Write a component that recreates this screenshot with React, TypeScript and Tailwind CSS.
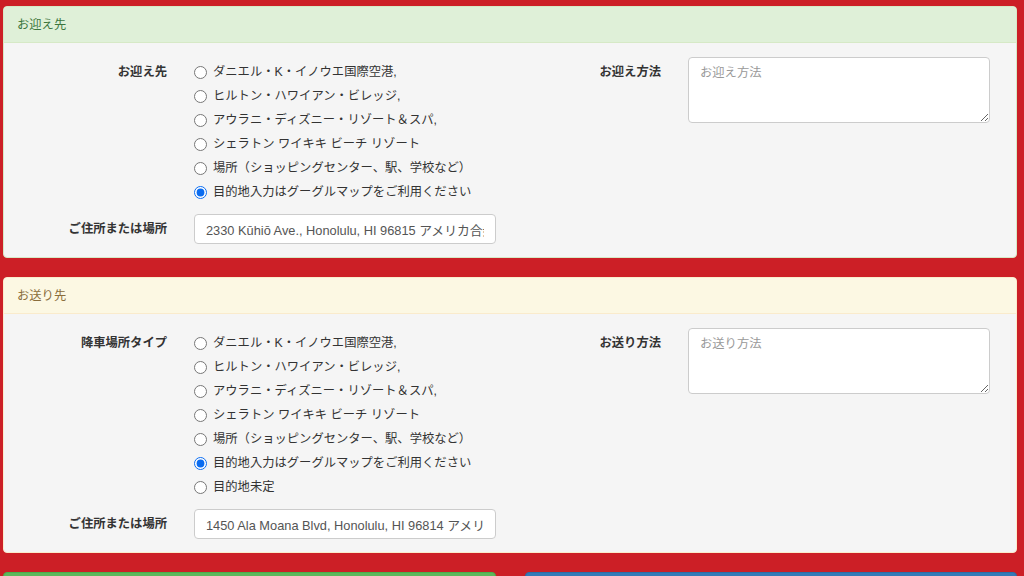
import React from "react";

const places = [
  "ダニエル・K・イノウエ国際空港,",
  "ヒルトン・ハワイアン・ビレッジ,",
  "アウラニ・ディズニー・リゾート＆スパ,",
  "シェラトン ワイキキ ビーチ リゾート",
  "場所（ショッピングセンター、駅、学校など）",
  "目的地入力はグーグルマップをご利用ください",
];

interface PanelProps {
  title: string;
  tone: "success" | "warning";
  label: string;
  methodLabel: string;
  options: string[];
  address: string;
  name: string;
}

function Panel({ title, tone, label, methodLabel, options, address, name }: PanelProps) {
  const border = tone === "success" ? "border-[#d6e9c6]" : "border-[#faebcc]";
  const head =
    tone === "success"
      ? "bg-[#dff0d8] text-[#3c763d] border-[#d6e9c6]"
      : "bg-[#fcf8e3] text-[#8a6d3b] border-[#faebcc]";

  return (
    <div className={`mb-[19px] overflow-hidden rounded-[4px] border bg-[#f5f5f5] ${border}`}>
      <div className={`flex h-[36px] items-center border-b px-[13px] pt-[2px] text-[12.3px] ${head}`}>
        {title}
      </div>
      <div className="flex pl-[14px] pt-[14px] pb-[13px]">
        <div className="w-[492px]">
          <div className="flex items-start gap-[27px]">
            <div className="w-[149px] pt-[3px] text-right text-[12.3px] font-bold leading-[24px] text-[#333]">
              {label}
            </div>
            <div className="flex flex-col pt-[3px]">
              {options.map((opt, i) => (
                <label key={opt} className="flex h-[24px] items-center gap-[6px] text-[12.3px] text-[#333]">
                  <input
                    type="radio"
                    name={name}
                    defaultChecked={i === 5}
                    className="m-0 h-[13px] w-[13px] accent-[#0a6cf0]"
                  />
                  <span>{opt}</span>
                </label>
              ))}
            </div>
          </div>
          <div className="mt-[10px] flex items-center gap-[27px]">
            <div className="w-[149px] text-right text-[12.3px] font-bold text-[#333]">ご住所または場所</div>
            <input
              type="text"
              defaultValue={address}
              className="h-[30px] w-[302px] rounded-[4px] border border-[#ccc] bg-white px-[11px] text-[12.8px] text-[#555] outline-none"
            />
          </div>
        </div>
        <div className="flex items-start gap-[27px]">
          <div className="w-[151px] pt-[3px] text-right text-[12.3px] font-bold leading-[24px] text-[#333]">
            {methodLabel}
          </div>
          <textarea
            placeholder={methodLabel}
            className="h-[66px] w-[302px] rounded-[4px] border border-[#ccc] bg-white px-[11px] py-[5px] text-[12.3px] leading-[20px] text-[#555] outline-none placeholder:text-[#999]"
          />
        </div>
      </div>
    </div>
  );
}

export default function App() {
  return (
    <div
      className="h-[576px] overflow-hidden bg-[#cc1f26] px-[3px] pt-[6px] pr-[7px]"
      style={{ fontFamily: '"Liberation Sans", "Noto Sans CJK JP", sans-serif' }}
    >
      <Panel
        title="お迎え先"
        tone="success"
        label="お迎え先"
        methodLabel="お迎え方法"
        options={places}
        address="2330 Kūhiō Ave., Honolulu, HI 96815 アメリカ合衆国"
        name="pickup"
      />
      <Panel
        title="お送り先"
        tone="warning"
        label="降車場所タイプ"
        methodLabel="お送り方法"
        options={[...places, "目的地未定"]}
        address="1450 Ala Moana Blvd, Honolulu, HI 96814 アメリカ合衆国"
        name="dropoff"
      />
      <div className="flex gap-[29px]">
        <button className="h-[40px] w-[493px] rounded-[4px] border border-[#4cae4c] bg-[#5cb85c]" />
        <button className="h-[40px] w-[492px] rounded-[4px] border border-[#2e6da4] bg-[#337ab7]" />
      </div>
    </div>
  );
}
